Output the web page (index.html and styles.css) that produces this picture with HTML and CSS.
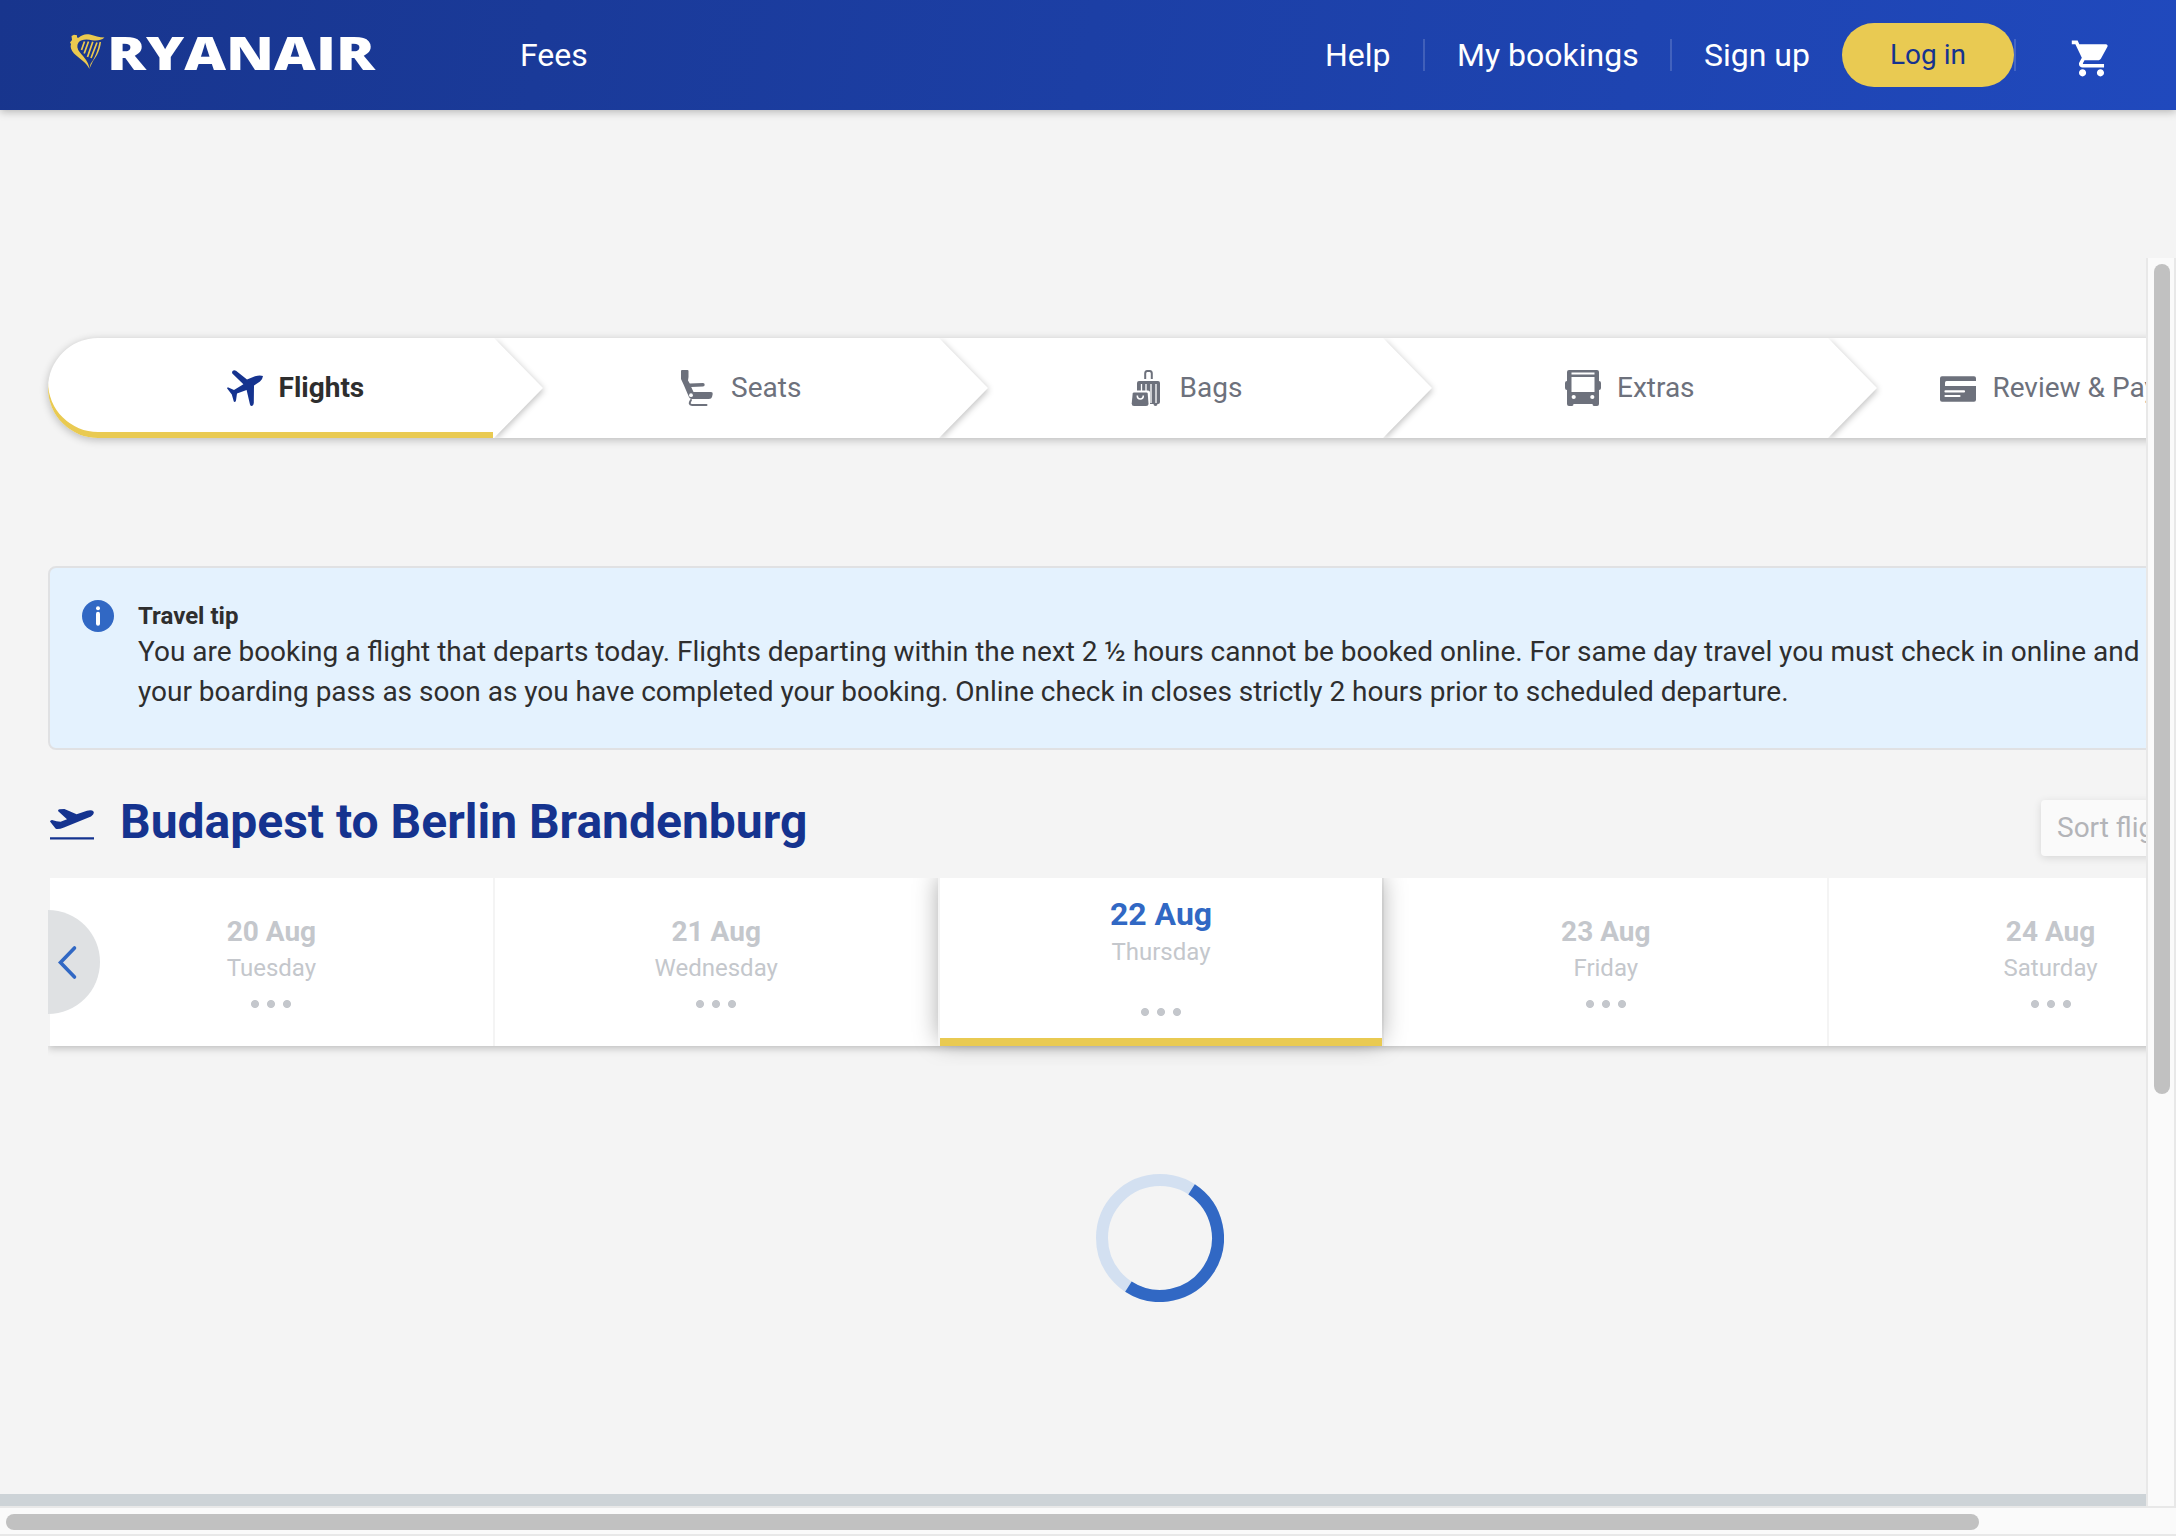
FILE: index.html
```html
<!DOCTYPE html>
<html lang="en">
<head>
<meta charset="utf-8">
<title>Ryanair</title>
<link rel="stylesheet" href="styles.css">
</head>
<body>
<header class="header">
  <svg class="logo" width="310" height="40" viewBox="0 0 310 40">
    <path fill="#ebc94f" d="M1.500 2 4 .8l3 .4V3.500l1.500.3C12 .5 16-.5 20 .6c5 1.500 9 2.900 14.500 2.900C31 6.500 27 7 22 6.200 16 5 11 5.500 8.500 8.500 6.500 11.500 7 15 10 18.500c4.500 5.500 8.500 9 9.500 16.500C16 28 9 24.500 4 19.500 1 16 0 13 1 10L0 8.500 2 6z"/>
    <path d="M14.500 7.500 11.500 16M18.500 7.500 14.200 19.500M22.800 7.800 17.500 23M27 8.500 21 24" stroke="#ebc94f" stroke-width="1.700"/>
    <path fill="#ebc94f" d="M29.500 8h1.500c-1 8-4 14-8 19l-3.500 7.500L20.500 30C25 24 28 16 29.500 8z"/>
    <text class="wordmark" x="37" y="35.800" textLength="268" lengthAdjust="spacingAndGlyphs">RYANAIR</text>
  </svg>
  <nav class="nav-main"><a>Fees</a></nav>
  <nav class="nav-user">
    <a class="nav-item help">Help</a>
    <i class="sep"></i>
    <a class="nav-item bookings">My bookings</a>
    <i class="sep"></i>
    <a class="nav-item signup">Sign up</a>
    <a class="login">Log in</a>
    <i class="sep"></i>
    <svg class="cart" width="43" height="43" viewBox="0 0 24 24" fill="#fff"><path d="M7 18c-1.100 0-1.990.9-1.990 2S5.900 22 7 22s2-.9 2-2-.9-2-2-2zM1 2v2h2l3.600 7.590-1.350 2.450c-.16.28-.25.61-.25.96 0 1.100.9 2 2 2h12v-2H7.420c-.14 0-.25-.11-.25-.25l.03-.12.9-1.630h7.450c.75 0 1.410-.41 1.750-1.030l3.580-6.490A1.003 1.003 0 0 0 20 4H5.210l-.94-2H1zm16 16c-1.100 0-1.990.9-1.990 2s.89 2 1.990 2 2-.9 2-2-.9-2-2-2z"/></svg>
  </nav>
</header>

<div class="window">
  <main class="content">
    <ol class="steps">
      <li class="step active">
        <svg width="36" height="36" viewBox="0 0 36 36"><path fill="#15338f" d="M5 2Q6-.5 9 .8L20 9.500 28 6.200Q33 4.800 36 6 35.500 9.500 33 11.500L27 15.500 26.800 33Q26.500 35.800 25 36 23.300 36 23 34.500L19.600 20 10 23.500 9 30.500Q8.500 32 7.500 32L6.800 31.500 4.800 24.500 0 18.300.8 17.200 7 20 16.400 14.200 5.300 3.500z"/></svg>
        <span>Flights</span>
        <svg class="arrow" width="62" height="100" viewBox="0 0 62 100"><path d="M0 0H1L50 50 1 100H0z"/></svg>
      </li>
      <li class="step">
        <svg width="36" height="36" viewBox="0 0 36 36"><g fill="#6d717c"><path d="M3 0h5.500q1 0 1 1v6l-.5 3.500L10.800 13.600 24 13q1.700 0 1.700 1.700T24 16.400l-11.800.7L14.500 22h17.500q2 0 1.700 2L33 27q-.5 2-3 2H13q-2.500 0-3.500-3L5 15.500 2 9V1q0-1 1-1z"/><path d="M12 30q-3 4.900 1 4.900h14.500" fill="none" stroke="#6d717c" stroke-width="2" stroke-linecap="round"/></g><circle cx="12" cy="25.200" r="1.900" fill="#fff"/></svg>
        <span>Seats</span>
        <svg class="arrow" width="62" height="100" viewBox="0 0 62 100"><path d="M0 0H1L50 50 1 100H0z"/></svg>
      </li>
      <li class="step">
        <svg width="36" height="36" viewBox="0 0 36 36"><path d="M17.200 9V3.500q0-2.500 2-2.500h2.600q2 0 2 2.500V9" fill="none" stroke="#6d717c" stroke-width="2"/><path fill="#6d717c" d="M11 11h19q2 0 2 2v19q0 2-2 2h-.5q0 2-2 2t-2-2H22V22.500q0-2-2-2H9V13q0-2 2-2z"/><path d="M13.500 14v7M18 14v7M23 14v19M28 14v19" stroke="#fff" stroke-width="1.300"/><path fill="#6d717c" d="M6 22.500h12.500q1 0 1.200 1l.8 10q0 2.500-2.500 2.500H6q-2.300 0-2.300-2.500l1-10q.2-1 1.300-1z"/><path d="M9.300 25.500q0 3.500 3 3.500t3-3.500" fill="none" stroke="#fff" stroke-width="1.600"/></svg>
        <span>Bags</span>
        <svg class="arrow" width="62" height="100" viewBox="0 0 62 100"><path d="M0 0H1L50 50 1 100H0z"/></svg>
      </li>
      <li class="step">
        <svg width="36" height="36" viewBox="0 0 36 36"><path fill="#6d717c" d="M4 0h28q2 0 2 2v9q2 0 2 2v5q0 2-2 2v14q0 2-2 2h-3q-1.500 0-1.500-2h-19q0 2-1.500 2H4q-2 0-2-2V20q-2 0-2-2v-5q0-2 2-2V2q0-2 2-2z"/><path fill="#fff" d="M6.500 2.500h23v2h-23zM6.500 7h23v15h-23z"/><g fill="#fff"><circle cx="8.700" cy="27" r="2.100"/><circle cx="27.300" cy="27" r="2.100"/></g></svg>
        <span>Extras</span>
        <svg class="arrow" width="62" height="100" viewBox="0 0 62 100"><path d="M0 0H1L50 50 1 100H0z"/></svg>
      </li>
      <li class="step last">
        <svg width="36" height="36" viewBox="0 0 36 36"><rect y="6.300" width="36" height="25.400" rx="2" fill="#6d717c"/><path d="M36 11H6.500Q5 11 5 12.500V16h31z" fill="#fff"/><path d="M5.500 21.400h18.500M5.500 26h14" stroke="#fff" stroke-width="2.200" stroke-linecap="round"/></svg>
        <span>Review &amp; Payment</span>
      </li>
    </ol>

    <section class="tip">
      <svg width="32" height="32" viewBox="0 0 32 32"><circle cx="16" cy="16" r="16" fill="#3168c4"/><circle cx="16" cy="8.300" r="2" fill="#fff"/><rect x="14" y="11.800" width="4" height="14" rx="2" fill="#fff"/></svg>
      <div class="tip-body">
        <h2>Travel tip</h2>
        <p>You are booking a flight that departs today. Flights departing within the next 2 ½ hours cannot be booked online. For same day travel you must check in online and print<br>your boarding pass as soon as you have completed your booking. Online check in closes strictly 2 hours prior to scheduled departure.</p>
      </div>
    </section>

    <div class="journey">
      <svg width="44" height="32" viewBox="0 0 44 32" fill="#15338f"><path d="M0 12.500Q.3 11 2 11L6.500 12.300 10.600 12.700 17 10.300 8 2Q8 .3 9.500.2L14.400 0 26.600 5.300 37 1.700Q42 .5 43.500 2.500 44.800 5 41 7.500L14 18.500Q7.500 21 5.500 19.500z"/><path d="M0 28.300h44v2.200H0z"/></svg>
      <h1>Budapest to Berlin Brandenburg</h1>
      <div class="sort">Sort flights by</div>
    </div>

    <div class="dates">
      <div class="date"><b>20 Aug</b><span>Tuesday</span><i class="dots"></i></div>
      <div class="date"><b>21 Aug</b><span>Wednesday</span><i class="dots"></i></div>
      <div class="date selected"><b>22 Aug</b><span>Thursday</span><i class="dots"></i></div>
      <div class="date"><b>23 Aug</b><span>Friday</span><i class="dots"></i></div>
      <div class="date"><b>24 Aug</b><span>Saturday</span><i class="dots"></i></div>
      <div class="prev"><svg width="52" height="104" viewBox="0 0 52 104"><path d="M26.500 38 12.500 52.500 26.500 67" fill="none" stroke="#3168c4" stroke-width="3.600" stroke-linecap="round"/></svg></div>
    </div>

    <svg class="spinner" width="128" height="128" viewBox="0 0 128 128" fill="none" stroke-width="12">
      <circle cx="64" cy="64" r="58" stroke="#d3e0f1"/>
      <path d="M64 6a58 58 0 0 1 0 116" stroke="#3168c4" transform="rotate(33 64 64)"/>
    </svg>
    <div class="footer-edge"></div>
  </main>
  <div class="vbar"><div class="vthumb"></div></div>
</div>
<div class="hbar"><div class="hthumb"></div></div>
</body>
</html>
```
FILE: styles.css
```css
* { box-sizing: border-box; }
body {
  margin: 0;
  width: 2176px;
  height: 1536px;
  overflow: hidden;
  display: flex;
  flex-direction: column;
  background: #f4f4f4;
  font-family: Roboto, "Liberation Sans", sans-serif;
  color: #2e2e2e;
}
h1, h2, p, ol { margin: 0; padding: 0; }

.header {
  flex: none;
  height: 110px;
  display: flex;
  align-items: center;
  padding-left: 70px;
  background: linear-gradient(100deg, #18358d, #2049bd);
  box-shadow: 0 2px 8px rgba(0, 0, 0, .25);
  color: #fff;
  font-size: 32px;
  position: relative;
}
.logo { margin-bottom: 2px; overflow: visible; }
.wordmark {
  font-family: "Open Sans", sans-serif;
  font-weight: 800;
  font-size: 46px;
  fill: #fff;
}
.nav-main { margin-left: 140px; flex: 1; }
.nav-user { display: flex; align-items: center; width: 851px; }
.nav-item { flex: none; white-space: nowrap; }
.help { width: 98px; }
.bookings { width: 213px; margin-left: 32px; }
.signup { width: 138px; margin-left: 32px; }
.sep { flex: none; width: 2px; height: 32px; background: rgba(255, 255, 255, .16); }
.login {
  flex: none;
  width: 172px;
  height: 64px;
  line-height: 64px;
  border-radius: 32px;
  background: #e9ca52;
  color: #15338f;
  font-size: 28px;
  text-align: center;
}
.cart { margin: 6px 0 0 54px; }

.window { flex: 1; min-height: 0; display: flex; }
.content {
  width: 2146px;
  flex: none;
  overflow: hidden;
  display: flex;
  flex-direction: column;
  padding: 228px 0 0 48px;
}
.content > * { flex: none; }

.steps {
  width: 2224px;
  height: 100px;
  display: flex;
  list-style: none;
  background: #fff;
  border-radius: 50px;
  box-shadow: 0 2px 8px rgba(0, 0, 0, .24);
}
.step {
  position: relative;
  width: 444.8px;
  display: flex;
  align-items: center;
  justify-content: center;
  gap: 16px;
  padding-left: 50px;
  font-size: 28px;
  color: #6d717c;
  white-space: nowrap;
}
.step span { padding-bottom: 1px; }
.step.last { padding-left: 63px; }
.step.active {
  border-radius: 50px 0 0 50px;
  box-shadow: inset 0 -6px #e9ca52;
  color: #2e2e2e;
}
.step.active span { font-weight: 700; }
.arrow { position: absolute; left: 100%; top: 0; overflow: hidden; }
.arrow path { fill: #fff; filter: drop-shadow(1px 2px 3px rgba(0, 0, 0, .24)); }

.tip {
  width: 2224px;
  height: 184px;
  margin-top: 128px;
  padding: 32px;
  display: flex;
  gap: 24px;
  background: #e4f2fe;
  border: 2px solid #e0e1e3;
  border-radius: 8px;
}
.tip h2 { font-size: 24px; line-height: 32px; font-weight: 700; }
.tip p { font-size: 28px; line-height: 40px; white-space: nowrap; word-spacing: -.06px; }

.journey {
  width: 2224px;
  height: 128px;
  display: flex;
  align-items: flex-start;
  color: #15338f;
}
.journey svg { margin: 59px 26px 0 2px; }
.journey h1 { font-size: 48px; line-height: 56px; font-weight: 700; margin-top: 44px; }
.sort {
  margin: 50px 0 0 auto;
  width: 231px;
  height: 56px;
  line-height: 56px;
  padding-left: 16px;
  border-radius: 4px;
  background: #fafafa;
  box-shadow: 0 2px 8px rgba(0, 0, 0, .12);
  color: #b3b4b8;
  font-size: 28px;
}

.dates {
  position: relative;
  width: 2224px;
  height: 168px;
  display: flex;
  background: #fff;
  box-shadow: 0 2px 8px rgba(0, 0, 0, .24);
  clip-path: inset(0 0 -20px 0);
}
.date {
  width: 444.8px;
  border-left: 2px solid #f4f4f4;
  padding-top: 36px;
  display: flex;
  flex-direction: column;
  align-items: center;
  color: #c4c7cc;
}
.date b { font-size: 28px; line-height: 36px; }
.date span { font-size: 24px; line-height: 36px; }
.dots { width: 40px; height: 8px; margin-top: 14px; background: radial-gradient(circle at 4px 4px, #c4c7cc 3.600px, transparent 4.400px) 0 0 / 16px 8px; }
.date.selected {
  position: relative;
  padding-top: 18px;
  background: linear-gradient(#e9ca52, #e9ca52) 0 100% / 100% 8px no-repeat #fff;
  background-clip: padding-box;
  box-shadow: 0 -4px 24px -2px rgba(0, 0, 0, .38);
}
.selected b { font-size: 32px; color: #3168c4; }
.selected span { margin-top: 2px; }
.selected .dots { margin-top: 38px; }
.prev {
  position: absolute;
  left: 0;
  top: 32px;
  width: 52px;
  height: 104px;
  border-radius: 0 52px 52px 0;
  background: #dfe1e3;
}

.spinner { margin: 128px 0 0 1048px; }
.footer-edge { height: 12px; margin: auto 0 0 -48px; background: #cdd3d7; }

.vbar {
  width: 30px;
  margin-top: 148px;
  padding: 6px 4px 0 6px;
  background: #fafafa;
  border: solid #e8e8e8;
  border-width: 0 2px;
}
.vthumb { width: 16px; height: 830px; border-radius: 8px; background: #c1c1c1; }
.hbar {
  flex: none;
  height: 30px;
  padding: 6px 0 0 6px;
  background: #fafafa;
  border: solid #e8e8e8;
  border-width: 2px 0;
}
.hthumb { width: 1973px; height: 16px; border-radius: 8px; background: #c1c1c1; }
```
